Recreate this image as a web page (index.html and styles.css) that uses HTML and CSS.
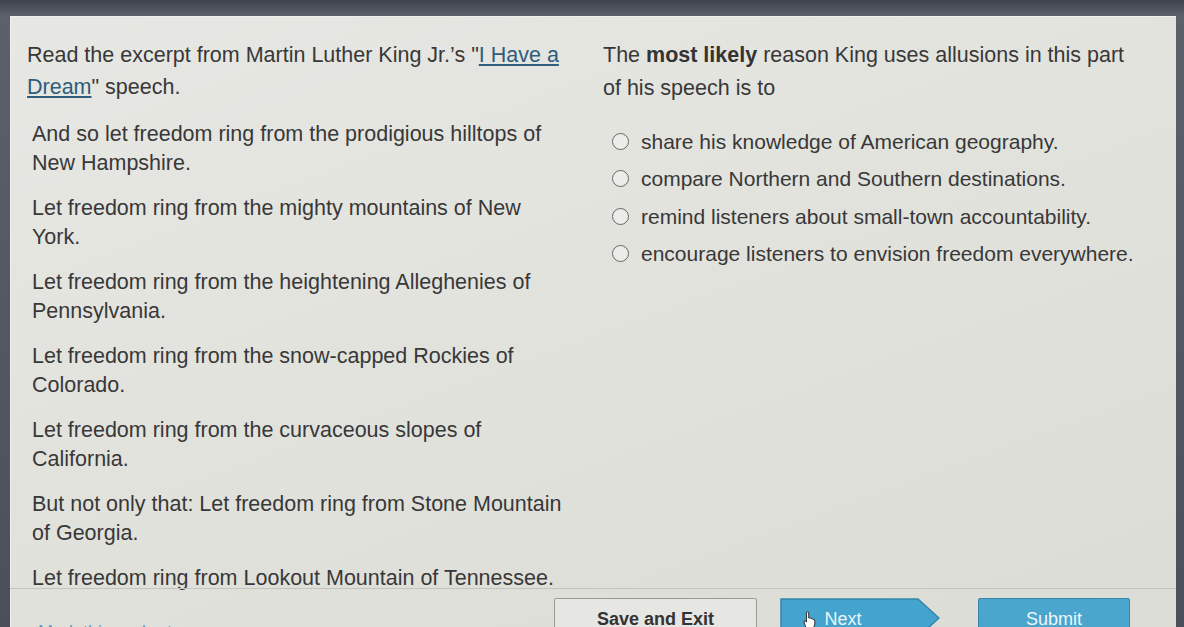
FILE: index.html
```html
<!DOCTYPE html>
<html lang="en">
<head>
<meta charset="utf-8">
<title>Question</title>
<link rel="stylesheet" href="styles.css">
</head>
<body>
<div class="screen">
  <main class="content">
    <section class="passage">
      <p class="intro">Read the excerpt from Martin Luther King Jr.’s "<a class="ref" href="#">I Have a Dream</a>" speech.</p>
      <p class="stanza">And so let freedom ring from the prodigious hilltops of New Hampshire.</p>
      <p class="stanza">Let freedom ring from the mighty mountains of New York.</p>
      <p class="stanza">Let freedom ring from the heightening Alleghenies of Pennsylvania.</p>
      <p class="stanza">Let freedom ring from the snow-capped Rockies of Colorado.</p>
      <p class="stanza">Let freedom ring from the curvaceous slopes of California.</p>
      <p class="stanza">But not only that: Let freedom ring from Stone Mountain of Georgia.</p>
      <p class="stanza">Let freedom ring from Lookout Mountain of Tennessee.</p>
    </section>
    <section class="question">
      <p class="prompt">The <b>most likely</b> reason King uses allusions in this part of his speech is to</p>
      <ul class="options">
        <li class="option"><span class="radio"></span><span>share his knowledge of American geography.</span></li>
        <li class="option"><span class="radio"></span><span>compare Northern and Southern destinations.</span></li>
        <li class="option"><span class="radio"></span><span>remind listeners about small-town accountability.</span></li>
        <li class="option"><span class="radio"></span><span>encourage listeners to envision freedom everywhere.</span></li>
      </ul>
    </section>
  </main>
  <footer class="footer">
    <a class="mark" href="#">Mark this and return</a>
    <button class="btn save">Save and Exit</button>
    <button class="btn next">
      <svg class="next-shape" viewBox="0 0 160 40" preserveAspectRatio="none" aria-hidden="true"><path d="M1 1 H138 L159 20 L138 39 H1 Z" fill="#45a4cd" stroke="#3585a9" stroke-width="1.5"/></svg>
      <span class="next-label">Next</span>
      <svg class="hand" viewBox="0 0 14 18" aria-hidden="true"><path d="M4 17 L2 11 Q1.5 9.5 3 9.8 L4.5 11 V2 Q4.5 0.8 5.6 0.8 Q6.7 0.8 6.7 2 V7 Q8.5 6.5 9 7.5 Q10.8 7.2 11 8.5 Q12.8 8.3 12.8 10 V13 L11.5 17 Z" fill="#fff" stroke="#222" stroke-width="0.9"/></svg>
    </button>
    <button class="btn submit">Submit</button>
  </footer>
</div>
</body>
</html>
```

FILE: styles.css
```css
html, body {
  margin: 0;
  padding: 0;
  height: 100%;
  overflow: hidden;
}
body {
  background: linear-gradient(180deg, #3f434c 0px, #5b606a 16px, #4a4f5a 100%);
  font-family: "Liberation Sans", Arial, sans-serif;
  color: #383838;
}
.screen {
  margin: 16px 8px 0 10px;
  height: 611px;
  background: linear-gradient(160deg, #e7e7e3 0%, #e2e2dd 50%, #dcdcd6 100%);
  display: flex;
  flex-direction: column;
  box-shadow: inset 1px 1px 0 #f0f0ec;
}
.content {
  display: grid;
  grid-template-columns: 593px 1fr;
  height: 572px;
}
p { margin: 0; }
.passage {
  padding: 23px 0 0 17px;
  font-size: 21.5px;
  max-width: 545px;
}
.intro {
  line-height: 32px;
  margin-bottom: 17px;
}
.ref {
  color: #2f5d7c;
  text-decoration: underline;
  text-underline-offset: 2px;
}
.stanza {
  line-height: 29px;
  margin-bottom: 16px;
  padding-left: 5px;
}
.question {
  padding: 23px 0 0 0;
  font-size: 21.5px;
  max-width: 540px;
}
.prompt {
  line-height: 33px;
  margin-bottom: 22px;
}
.prompt b { font-weight: bold; color: #333; }
.options {
  list-style: none;
  margin: 0;
  padding: 0 0 0 9px;
  display: flex;
  flex-direction: column;
  gap: 8.3px;
}
.option {
  display: flex;
  align-items: center;
  gap: 12px;
  line-height: 29px;
  font-size: 21px;
  white-space: nowrap;
}
.radio {
  width: 15px;
  height: 15px;
  border: 1.5px solid #666;
  border-radius: 50%;
  background: #ecece8;
  flex: none;
}
.footer {
  border-top: 1px solid #c4c4be;
  display: flex;
  align-items: flex-start;
  padding: 9px 46px 0 28px;
  flex: 1;
  overflow: hidden;
}
.mark {
  flex: 1;
  color: #4d86b8;
  text-decoration: none;
  font-size: 18px;
  padding-top: 24px;
  opacity: 0.8;
}
.btn {
  font-family: "Liberation Sans", Arial, sans-serif;
  font-size: 18px;
  height: 40px;
  padding: 0;
  cursor: pointer;
}
.save {
  width: 203px;
  background: #e6e6e2;
  border: 1px solid #9a9a96;
  border-radius: 2px;
  color: #333;
  font-weight: bold;
  padding-top: 2px;
}
.next {
  position: relative;
  width: 160px;
  margin-left: 23px;
  margin-right: 38px;
  background: none;
  border: none;
  color: #e9f5fa;
}
.next-shape {
  position: absolute;
  inset: 0;
  width: 100%;
  height: 100%;
}
.next-label {
  position: relative;
  display: block;
  padding-top: 2px;
  padding-right: 34px;
}
.hand {
  position: absolute;
  left: 22px;
  top: 13px;
  width: 14px;
  height: 18px;
}
.submit {
  width: 152px;
  background: #4aa6cd;
  border: 1px solid #3787aa;
  border-radius: 2px;
  color: #eef7fb;
  padding-top: 2px;
}
```
